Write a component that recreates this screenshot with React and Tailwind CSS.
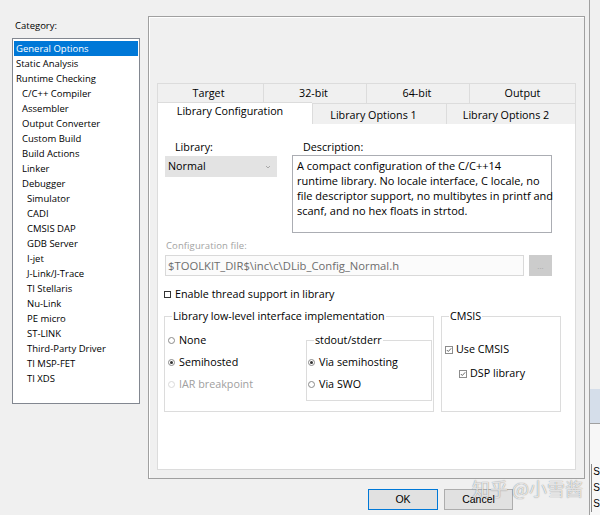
import React from 'react';

const categories = [
  ['General Options', 0], ['Static Analysis', 0], ['Runtime Checking', 0],
  ['C/C++ Compiler', 1], ['Assembler', 1], ['Output Converter', 1], ['Custom Build', 1],
  ['Build Actions', 1], ['Linker', 1], ['Debugger', 1],
  ['Simulator', 2], ['CADI', 2], ['CMSIS DAP', 2], ['GDB Server', 2], ['I-jet', 2],
  ['J-Link/J-Trace', 2], ['TI Stellaris', 2], ['Nu-Link', 2], ['PE micro', 2], ['ST-LINK', 2],
  ['Third-Party Driver', 2], ['TI MSP-FET', 2], ['TI XDS', 2],
];

const indent = ['pl-[2px]', 'pl-[8px]', 'pl-[13px]'];

const description = [
  'A compact configuration of the C/C++14',
  'runtime library. No locale interface, C locale, no',
  'file descriptor support, no multibytes in printf and',
  'scanf, and no hex floats in strtod.',
];

function Radio({ checked, disabled }) {
  return (
    <span className={`w-[7px] h-[7px] rounded-full border flex items-center justify-center mr-[4px] bg-white ${disabled ? 'border-[#dadada]' : 'border-[#8a8a8a]'}`}>
      {checked && <span className="w-[3px] h-[3px] rounded-full bg-[#333]" />}
    </span>
  );
}

function CheckedBox() {
  return (
    <svg width="8" height="8" viewBox="0 0 8 8" className="mr-[3px]">
      <rect x="0.5" y="0.5" width="7" height="7" fill="#fff" stroke="#8c8c8c" />
      <polyline points="1.8,4 3.3,5.5 6.2,2.3" fill="none" stroke="#6a6a6a" strokeWidth="1" />
    </svg>
  );
}

export default function App() {
  return (
    <div className="relative flex w-[600px] h-[515px] overflow-hidden bg-[#f0f0f0] text-[9.5px] text-black font-['Open_Sans',sans-serif]">
      {/* dialog */}
      <div className="w-[591px] flex flex-col border-r border-[#a0a0a0]">
        <div className="flex pt-[16px]">
          {/* category list */}
          <div className="ml-[12px] w-[128px]">
            <div className="mt-[2px] h-[15px] leading-[15px] pl-[3px]">Category:</div>
            <div className="mt-[5px] h-[366px] border border-[#828790] bg-white p-[1px] pt-[2px]">
              {categories.map(([name, lvl], i) => (
                <div
                  key={name}
                  className={`h-[15px] leading-[15px] ${indent[lvl]} ${i === 0 ? 'bg-[#0078d7] text-white' : ''}`}
                >
                  {name}
                </div>
              ))}
            </div>
          </div>

          {/* options panel */}
          <div className="ml-[8px] w-[437px] h-[463px] border border-[#a0a0a0] shadow-[inset_1px_1px_0_#ffffff] px-[8px] pt-[66px] pb-[8px] flex flex-col text-[10.75px]">
            <div className="flex h-[20px]">
              {[['Target', 'w-[106px] pr-[4px]'], ['32-bit', 'w-[103px] pr-[3px]'], ['64-bit', 'w-[103px] pr-[2px]'], ['Output', 'w-[107px]']].map(([t, w], i) => (
                <div key={t} className={`${w} border-t border-l ${i === 3 ? 'border-r' : ''} border-[#dcdcdc] bg-[#f0f0f0] flex items-center justify-center leading-[15px]`}>
                  {t}
                </div>
              ))}
            </div>
            <div className="flex h-[21px] items-end">
              <div className="w-[155px] h-[22px] bg-white border-l border-t border-[#dcdcdc] flex justify-center pt-[1px] pr-[10px] leading-[15px]">
                Library Configuration
              </div>
              <div className="w-[134px] h-[21px] bg-[#f0f0f0] border-t border-l border-[#dcdcdc] flex items-center justify-center pt-[2px] pr-[12px] leading-[15px]">
                Library Options 1
              </div>
              <div className="w-[130px] h-[21px] bg-[#f0f0f0] border-t border-l border-r border-[#dcdcdc] flex items-center justify-center pt-[2px] pr-[10px] leading-[15px]">
                Library Options 2
              </div>
            </div>

            {/* tab page */}
            <div className="flex-1 bg-white border-l border-r border-b border-[#dcdcdc] flex flex-col leading-[15px]">
              <div className="flex pt-[16px]">
                <div className="ml-[7px] w-[112px]">
                  <div className="h-[15px] pl-[10px]">Library:</div>
                  <div className="mt-[1px] h-[21px] bg-[#e3e3e3] flex items-center justify-between pl-[3px] pr-[6px]">
                    <span>Normal</span>
                    <svg width="6" height="4" viewBox="0 0 6 4">
                      <polyline points="1,1 3,3 5,1" fill="none" stroke="#9a9a9a" strokeWidth="0.8" />
                    </svg>
                  </div>
                </div>
                <div className="ml-[15px] w-[260px]">
                  <div className="h-[15px] pl-[11px]">Description:</div>
                  <div className="h-[78px] border border-[#abadb3] pl-[4px] pt-[2px] text-[11px] whitespace-nowrap">
                    {description.map(line => <div key={line}>{line}</div>)}
                  </div>
                </div>
              </div>

              <div className="mt-[5px] h-[15px] pl-[8px] text-[9.5px] text-[#a3a3a3] tracking-[0.1px]">Configuration file:</div>
              <div className="mt-[2px] flex">
                <div className="ml-[7px] w-[359px] h-[21px] border border-[#d9d9d9] bg-[#fbfbfb] text-[#6d6d6d] text-[11.25px] flex items-center pl-[2px]">
                  $TOOLKIT_DIR$\inc\c\DLib_Config_Normal.h
                </div>
                <div className="ml-[5px] w-[23px] h-[21px] bg-[#cccccc] text-[#a8a8a8] flex items-center justify-center text-[8px]">
                  ...
                </div>
              </div>

              <div className="mt-[11px] ml-[6px] h-[15px] flex items-center">
                <span className="w-[7px] h-[7px] border border-[#333] bg-white mr-[4px]" />
                <span>Enable thread support in library</span>
              </div>

              <div className="mt-[7px] ml-[6px] flex items-stretch">
                <fieldset className="w-[270px] border border-[#dcdcdc] p-0 m-0">
                  <legend className="ml-[7px] px-[1px] leading-[15px]">Library low-level interface implementation</legend>
                  <div className="flex pt-[5px] pb-[10px]">
                    <div className="w-[141px] pl-[3px]">
                      <div className="h-[22px] flex items-center"><Radio />None</div>
                      <div className="h-[22px] flex items-center"><Radio checked />Semihosted</div>
                      <div className="h-[22px] flex items-center text-[#a0a0a0]"><Radio disabled />IAR breakpoint</div>
                    </div>
                    <fieldset className="mt-[4px] w-[126px] border border-[#dcdcdc] p-0 m-0">
                      <legend className="ml-[7px] px-[1px] leading-[15px]">stdout/stderr</legend>
                      <div className="pt-[3px] pb-[5px] pl-[1px]">
                        <div className="h-[22px] flex items-center"><Radio checked />Via semihosting</div>
                        <div className="h-[22px] flex items-center"><Radio />Via SWO</div>
                      </div>
                    </fieldset>
                  </div>
                </fieldset>
                <fieldset className="ml-[7px] w-[120px] border border-[#dcdcdc] p-0 m-0">
                  <legend className="ml-[7px] px-[1px] leading-[15px]">CMSIS</legend>
                  <div className="pl-[3px]">
                    <div className="mt-[18px] h-[15px] flex items-center"><CheckedBox />Use CMSIS</div>
                    <div className="mt-[9px] ml-[14px] h-[15px] flex items-center"><CheckedBox />DSP library</div>
                  </div>
                </fieldset>
              </div>
            </div>
          </div>
        </div>

        {/* buttons */}
        <div className="mt-[10px] flex pl-[368px] gap-[6px] font-['Liberation_Sans',sans-serif] text-[10.5px]">
          <div className="w-[70px] h-[21px] border border-[#0078d7] bg-[#e1e1e1] flex items-center justify-center">OK</div>
          <div className="w-[69px] h-[21px] border border-[#adadad] bg-[#e1e1e1] flex items-center justify-center">Cancel</div>
        </div>
      </div>

      {/* neighbouring window edge */}
      <div className="flex-1 flex flex-col">
        <div className="flex-1 bg-[#f0f0f0]" />
        <div className="h-[35px] bg-[#d5deea] border-b border-[#a0a0a0]" />
        <div className="h-[91px] bg-[#f7f7f7] pt-[40px]">
          <div className="ml-[1px] border-l border-[#888] pl-[1px] text-[10px] leading-[16px] font-['Liberation_Sans',sans-serif]">
            <div>S</div>
            <div>S</div>
            <div>S</div>
          </div>
        </div>
      </div>

      {/* watermark */}
      <div className="absolute left-[472px] top-[475px] text-[18px] text-[rgba(255,255,255,0.8)] [text-shadow:0_0_1px_rgba(0,0,0,0.55)] font-['Noto_Sans_CJK_SC',sans-serif] whitespace-nowrap">
        知乎 @小雪酱
      </div>
    </div>
  );
}
